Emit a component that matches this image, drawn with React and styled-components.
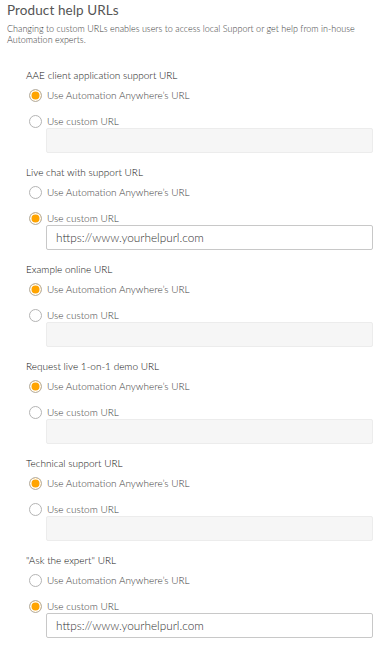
import React from "react";
import styled, { createGlobalStyle } from "styled-components";

const Global = createGlobalStyle`
  html, body { margin: 0; padding: 0; background: #fff; }
  body { font-family: Lato, "Open Sans", sans-serif; }
  * { box-sizing: border-box; }
`;

const Page = styled.div`
  width: 391px;
  padding: 2px 0 0 7px;
  display: flex;
  flex-direction: column;
`;

const Title = styled.h1`
  margin: 0;
  font-size: 13.5px;
  line-height: 16px;
  font-weight: 400;
  color: #555;
  letter-spacing: 0.1px;
`;

const Description = styled.p`
  margin: 5px 0 0;
  font-size: 9px;
  line-height: 11px;
  font-weight: 300;
  color: #3c3c3c;
  width: 375px;
`;

const Sections = styled.div`
  display: flex;
  flex-direction: column;
  gap: 12px;
  margin-top: 23px;
  padding-left: 19px;
`;

const Section = styled.div`
  display: flex;
  flex-direction: column;
`;

const Heading = styled.div`
  font-size: 10px;
  line-height: 14px;
  font-weight: 300;
  color: #111;
  margin-bottom: 6px;
`;

const Option = styled.label`
  display: flex;
  align-items: center;
  gap: 5px;
  height: 14px;
  padding-left: 3px;
  font-size: 10px;
  font-weight: 300;
  color: #3c3c3c;
  margin-bottom: ${(p) => (p.$last ? "0" : "12px")};
`;

const Radio = styled.span`
  width: 13px;
  height: 13px;
  border-radius: 50%;
  border: 1px solid #b4b4b4;
  background: ${(p) => (p.$checked ? "#ffa400" : "#fff")};
  box-shadow: ${(p) => (p.$checked ? "inset 0 0 0 1.5px #fff" : "none")};
  flex: none;
`;

const UrlInput = styled.div`
  margin: 0 0 0 20px;
  width: 327px;
  height: 25px;
  border-radius: 2px;
  border: 1px solid ${(p) => (p.$active ? "#c8c8c8" : "#ececec")};
  background: ${(p) => (p.$active ? "#fff" : "#f6f6f6")};
  display: flex;
  align-items: center;
  padding-left: 9px;
  font-size: 11.8px;
  font-weight: 300;
  color: #333;
`;

const sections = [
  { title: "AAE client application support URL", custom: false },
  { title: "Live chat with support URL", custom: true },
  { title: "Example online URL", custom: false },
  { title: "Request live 1-on-1 demo URL", custom: false },
  { title: "Technical support URL", custom: false },
  { title: "\"Ask the expert\" URL", custom: true },
];

export default function App() {
  return (
    <>
      <Global />
      <Page>
        <Title>Product help URLs</Title>
        <Description>
          Changing to custom URLs enables users to access local Support or get help from in-house
          Automation experts.
        </Description>
        <Sections>
          {sections.map((s) => (
            <Section key={s.title}>
              <Heading>{s.title}</Heading>
              <Option>
                <Radio $checked={!s.custom} />
                Use Automation Anywhere’s URL
              </Option>
              <Option $last>
                <Radio $checked={s.custom} />
                Use custom URL
              </Option>
              <UrlInput $active={s.custom}>
                {s.custom ? "https://www.yourhelpurl.com" : ""}
              </UrlInput>
            </Section>
          ))}
        </Sections>
      </Page>
    </>
  );
}
